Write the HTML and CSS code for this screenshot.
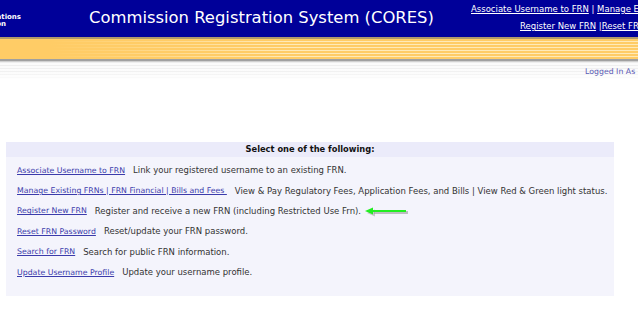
FILE: index.html
```html
<!DOCTYPE html>
<html lang="en">
<head>
<meta charset="utf-8">
<title>CORES</title>
<link rel="stylesheet" href="styles.css">
</head>
<body>
<header class="topbar">
  <div class="logo-clip">
    <div class="logo-text"><div>Federal Communications</div><div class="logo-line2">Commission</div></div>
  </div>
  <h1 class="title">Commission Registration System (CORES)</h1>
  <nav class="toplinks">
    <div class="toplinks-row"><a href="#">Associate Username to FRN</a> | <a href="#">Manage Existing FRNs</a></div>
    <div class="toplinks-row second"><a href="#">Register New FRN</a> |<a href="#">Reset FRN Password</a></div>
  </nav>
</header>
<div class="goldband"></div>
<div class="userbar"><span class="logged">Logged In As</span></div>

<main class="content">
  <section class="panel">
    <div class="panel-head">Select one of the following:</div>
    <ul class="options">
      <li><a href="#">Associate Username to FRN</a><span class="desc">Link your registered username to an existing FRN.</span></li>
      <li><a href="#">Manage Existing FRNs | FRN Financial | Bills and Fees&nbsp;</a><span class="desc">View &amp; Pay Regulatory Fees, Application Fees, and Bills | View Red &amp; Green light status.</span></li>
      <li><a href="#">Register New FRN</a><span class="desc">Register and receive a new FRN (including Restricted Use Frn).</span><svg class="arrow" width="46" height="12" viewBox="0 0 46 12"><path d="M10 6.5 H44" stroke="#9a9a9a" stroke-width="3" opacity="0.6"/><path d="M3 7 L11 3.5 L11 10.5 Z" fill="#9a9a9a" opacity="0.5"/><path d="M8 5 H42" stroke="#22ee22" stroke-width="2.2"/><path d="M1 5 L9 1.5 L9 8.5 Z" fill="#22ee22"/></svg></li>
      <li><a href="#">Reset FRN Password</a><span class="desc">Reset/update your FRN password.</span></li>
      <li><a href="#">Search for FRN</a><span class="desc">Search for public FRN information.</span></li>
      <li><a href="#">Update Username Profile</a><span class="desc">Update your username profile.</span></li>
    </ul>
  </section>
</main>
</body>
</html>
```

FILE: styles.css
```css
html, body {
  margin: 0;
  padding: 0;
  background: #ffffff;
  overflow: hidden;
  font-family: "DejaVu Sans", Verdana, sans-serif;
}

.topbar {
  height: 37px;
  background: #000099;
  display: flex;
  align-items: stretch;
  white-space: nowrap;
}

.topbar > * {
  flex-shrink: 0;
}

.logo-clip {
  width: 21px;
  overflow: hidden;
  display: flex;
  justify-content: flex-end;
  padding-top: 13.5px;
  box-sizing: border-box;
}

.logo-text {
  flex-shrink: 0;
  color: #ffffff;
  font-size: 7px;
  font-weight: bold;
  line-height: 7.5px;
  text-align: right;
}

.logo-line2 {
  padding-right: 15px;
}

.title {
  margin: 0 0 0 68px;
  padding-top: 7px;
  width: 382px;
  color: #ffffff;
  font-weight: normal;
  font-size: 16.4px;
  line-height: 22px;
  font-family: "DejaVu Sans", Verdana, sans-serif;
}

.toplinks {
  padding-top: 1px;
  font-size: 8.5px;
  line-height: 17px;
  color: #ffffff;
}

.toplinks a {
  color: #ffffff;
  text-decoration: underline;
}

.toplinks-row.second {
  padding-left: 49px;
}

.goldband {
  height: 24px;
  box-sizing: border-box;
  border-top: 2px solid #b09a6a;
  border-bottom: 2px solid #a0a0a0;
  background:
    linear-gradient(to right, #ffcc66 0, #ffcc66 8%, rgba(255, 204, 102, 0) 45%),
    repeating-linear-gradient(to bottom, #ffcc66 0, #ffcc66 2px, #ffeab8 2px, #ffeab8 3px);
}

.userbar {
  height: 19px;
  background:
    linear-gradient(to bottom, rgba(255,255,255,0) 0, rgba(255,255,255,0.2) 60%, #ffffff 100%),
    repeating-linear-gradient(to bottom, #eeeeee 0, #eeeeee 1px, #fbfbfb 1px, #fbfbfb 3px);
  border-top: 1px solid #d0d0d0;
  display: flex;
  justify-content: flex-end;
  align-items: center;
  padding-top: 1px;
  box-sizing: border-box;
}

.logged {
  font-size: 7.8px;
  color: #5a5ab4;
  width: 53px;
  white-space: nowrap;
}

.content {
  padding: 62px 0 0 6px;
}

.panel {
  width: 608px;
  background: #f4f4fc;
  padding-bottom: 14px;
}

.panel-head {
  height: 15px;
  line-height: 15px;
  background: #ebebfa;
  text-align: center;
  font-weight: bold;
  font-size: 8.3px;
  color: #111111;
}

.options {
  list-style: none;
  margin: 0;
  padding: 3px 0 0 11px;
}

.options li {
  height: 20.4px;
  display: flex;
  align-items: center;
  white-space: nowrap;
}

.options a {
  font-size: 7.8px;
  color: #3b3bab;
  text-decoration: underline;
}

.desc {
  margin-left: 8px;
  font-size: 8.5px;
  color: #333333;
}

.arrow {
  margin-left: 3px;
  margin-top: 2px;
}
```
